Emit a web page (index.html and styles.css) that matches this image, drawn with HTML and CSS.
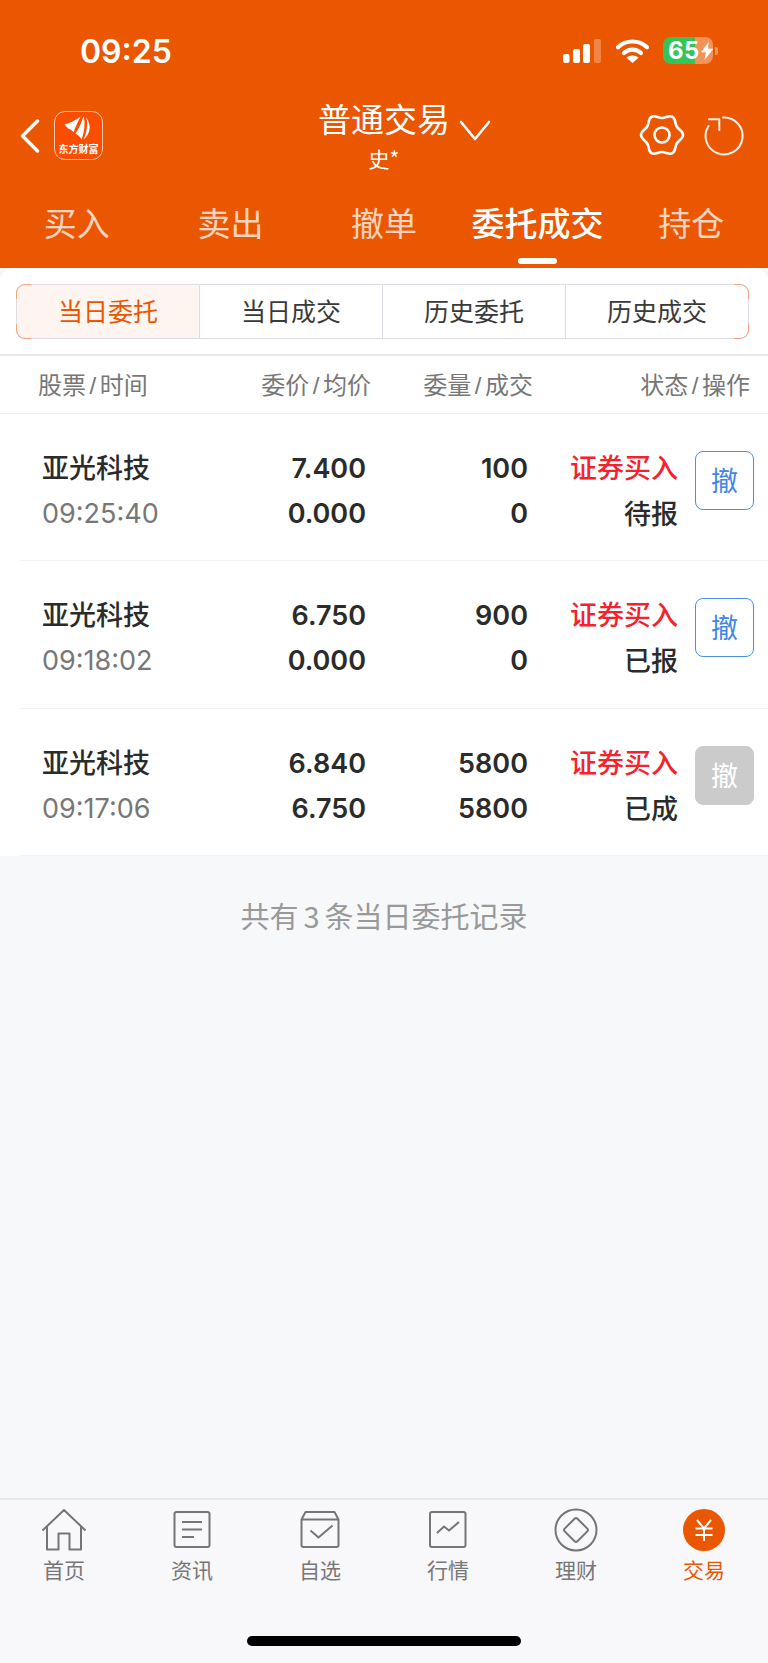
FILE: index.html
```html
<!DOCTYPE html>
<html lang="zh-CN">
<head>
<meta charset="utf-8">
<title>委托成交</title>
<link rel="stylesheet" href="styles.css">
</head>
<body>
<div class="app">
  <header class="top">
    <div class="status">
      <span class="clock">09:25</span>
      <div class="status-icons">
        <svg class="signal" width="38" height="24" viewBox="0 0 38 24">
          <rect x="0" y="15" width="6.5" height="9" rx="2" fill="#fff"/>
          <rect x="10" y="10" width="7" height="14" rx="2" fill="#fff"/>
          <rect x="20" y="5" width="7" height="19" rx="2" fill="#fff"/>
          <rect x="31" y="0" width="7" height="24" rx="2" fill="#fff" opacity=".28"/>
        </svg>
        <svg class="wifi" width="33" height="24" viewBox="0 0 33 24">
          <path d="M2 8.2C10 .6 23 .6 31 8.2" fill="none" stroke="#fff" stroke-width="4.2" stroke-linecap="round"/>
          <path d="M8 14c4.800-4.500 12.200-4.500 17 0" fill="none" stroke="#fff" stroke-width="4.200" stroke-linecap="round"/>
          <path d="M16.500 24l-6-5.300c3.500-2.800 8.500-2.800 12 0z" fill="#fff"/>
        </svg>
        <div class="battery">
          <span class="battery-num">65</span>
          <svg class="bolt" width="14" height="20" viewBox="0 0 14 20"><path d="M8.500 0L0 11.500h5.500L4 20l10-12.500H8z" fill="#fff"/></svg>
        </div>
        <span class="battery-nub"></span>
      </div>
    </div>

    <div class="bar">
      <div class="bar-left">
        <svg class="back" width="20" height="34" viewBox="0 0 20 34"><path d="M17.500 2L2.500 17l15 15" fill="none" stroke="#fff" stroke-width="3.400" stroke-linecap="round" stroke-linejoin="round"/></svg>
        <div class="logo">
          <svg class="logo-fan" width="47" height="30" viewBox="0 0 47 30">
            <path d="M25.500 4.500C20 9 14 11 9.500 12.500L13 16.500C16 17.500 17.500 18.500 18.500 20.500C20.500 14 23.500 9 25.500 4.500z" fill="#fff"/>
            <path d="M28.500 4C26.500 11 23.500 17 20.500 21.500C23 23 25.500 25 26.500 27.500C29.500 20 30.500 11 28.500 4z" fill="#fff"/>
            <path d="M31 5C33.500 12 31.500 21 28.500 27.500C34 23 38 15 31 5z" fill="#fff"/>
          </svg>
          <span class="logo-name">东方财富</span>
        </div>
      </div>
      <div class="title">
        <div class="title-main">普通交易
          <svg class="chevron" width="32" height="22" viewBox="0 0 32 22"><path d="M2 2l14 17L30 2" fill="none" stroke="#fff" stroke-width="2.600" stroke-linecap="round" stroke-linejoin="round"/></svg>
        </div>
        <div class="title-sub">史*</div>
      </div>
      <div class="bar-right">
        <svg class="gear" width="46" height="44" viewBox="0 0 46 44">
          <path d="M44 22C44 18 39.700 16.960 37.700 13.500C35.700 10.040 36.960 5.810 33.500 3.810C30.040 1.810 27 5 23 5C19 5 15.960 1.810 12.500 3.810C9.040 5.810 10.280 10.040 8.280 13.500C6.280 16.960 2 18 2 22C2 26 6.280 27.040 8.280 30.500C10.280 33.960 9.040 38.190 12.500 40.190C15.960 42.190 19 39 23 39C27 39 30.040 42.190 33.500 40.190C36.960 38.190 35.720 33.960 37.720 30.500C39.720 27.040 44 26 44 22z" fill="none" stroke="#fff" stroke-width="2.600" stroke-linejoin="round"/>
          <circle cx="23" cy="22" r="7.500" fill="none" stroke="#fff" stroke-width="2.600"/>
        </svg>
        <svg class="refresh" width="40" height="40" viewBox="0 0 40 40">
          <path d="M19 1.500A18.500 18.500 0 1 1 4.500 10M5 3.200H15.300V14" fill="none" stroke="#fff" stroke-width="2" stroke-linecap="round" stroke-linejoin="round" opacity=".92"/>
        </svg>
      </div>
    </div>

    <nav class="tabs">
      <span class="tab">买入</span>
      <span class="tab">卖出</span>
      <span class="tab">撤单</span>
      <span class="tab tab-on">委托成交</span>
      <span class="tab">持仓</span>
    </nav>
  </header>

  <main class="sheet">
    <div class="card">
      <div class="segments">
        <span class="seg seg-on">当日委托</span>
        <span class="seg">当日成交</span>
        <span class="seg">历史委托</span>
        <span class="seg">历史成交</span>
      </div>
      <div class="thead">
        <span class="th th-stock">股票<i>/</i>时间</span>
        <span class="th th-price">委价<i>/</i>均价</span>
        <span class="th th-vol">委量<i>/</i>成交</span>
        <span class="th th-state">状态<i>/</i>操作</span>
      </div>

      <div class="row">
        <div class="c-stock"><b>亚光科技</b><span class="time">09:25:40</span></div>
        <div class="c-num"><b>7.400</b><b>0.000</b></div>
        <div class="c-num c-vol"><b>100</b><b>0</b></div>
        <div class="c-state"><span class="buy">证券买入</span><b>待报</b></div>
        <span class="cancel">撤</span>
      </div>
      <div class="row">
        <div class="c-stock"><b>亚光科技</b><span class="time">09:18:02</span></div>
        <div class="c-num"><b>6.750</b><b>0.000</b></div>
        <div class="c-num c-vol"><b>900</b><b>0</b></div>
        <div class="c-state"><span class="buy">证券买入</span><b>已报</b></div>
        <span class="cancel">撤</span>
      </div>
      <div class="row">
        <div class="c-stock"><b>亚光科技</b><span class="time">09:17:06</span></div>
        <div class="c-num"><b>6.840</b><b>6.750</b></div>
        <div class="c-num c-vol"><b>5800</b><b>5800</b></div>
        <div class="c-state"><span class="buy">证券买入</span><b>已成</b></div>
        <span class="cancel cancel-off">撤</span>
      </div>
    </div>
    <p class="summary">共有 3 条当日委托记录</p>
  </main>

  <footer class="foot">
    <nav class="dock">
      <div class="dock-item">
        <svg width="46" height="44" viewBox="0 0 46 44"><path d="M1.500 22.500L23 2l21.500 20.500M6 18.500V41.500h11.500V25.500h11V41.500H40V18.500" fill="none" stroke="#757575" stroke-width="2" stroke-linejoin="round"/></svg>
        <span>首页</span>
      </div>
      <div class="dock-item">
        <svg width="46" height="44" viewBox="0 0 46 44"><rect x="5.500" y="4" width="35" height="35" rx="2" fill="none" stroke="#757575" stroke-width="2"/><path d="M13 14h20M13 21.500h20M13 29h12" fill="none" stroke="#757575" stroke-width="2"/></svg>
        <span>资讯</span>
      </div>
      <div class="dock-item">
        <svg width="46" height="44" viewBox="0 0 46 44"><path d="M4.500 11.500L8.500 4h29l4 7.500M4.500 11.500h37V37a2 2 0 0 1-2 2h-33a2 2 0 0 1-2-2z" fill="none" stroke="#757575" stroke-width="2" stroke-linejoin="round"/><path d="M13.500 22.500l8 7 14-12" fill="none" stroke="#757575" stroke-width="2"/></svg>
        <span>自选</span>
      </div>
      <div class="dock-item">
        <svg width="46" height="44" viewBox="0 0 46 44"><rect x="5" y="4" width="35.500" height="35" rx="2" fill="none" stroke="#757575" stroke-width="2"/><path d="M12 25l7-6.500 5 4L34 14" fill="none" stroke="#757575" stroke-width="2"/></svg>
        <span>行情</span>
      </div>
      <div class="dock-item">
        <svg width="46" height="44" viewBox="0 0 46 44"><circle cx="23" cy="22" r="20.500" fill="none" stroke="#757575" stroke-width="2"/><rect x="14" y="13" width="18" height="18" rx="2" transform="rotate(45 23 22)" fill="none" stroke="#757575" stroke-width="2"/></svg>
        <span>理财</span>
      </div>
      <div class="dock-item dock-on">
        <svg width="46" height="44" viewBox="0 0 46 44"><circle cx="23" cy="22" r="21" fill="#eb5600"/><path d="M16 12l7 8.500L30 12M14.500 20.500h17M14.500 27h17M23 20.500V33" fill="none" stroke="#fff" stroke-width="2"/></svg>
        <span>交易</span>
      </div>
    </nav>
    <div class="home-bar"></div>
  </footer>
</div>
</body>
</html>
```
FILE: styles.css
```css
* { box-sizing: border-box; }

html, body {
  margin: 0;
  padding: 0;
}

body {
  width: 768px;
  height: 1663px;
  overflow: hidden;
  background: #f7f8fa;
  font-family: "Noto Sans CJK SC", "Noto Sans", sans-serif;
}

.app {
  display: flex;
  flex-direction: column;
  height: 1663px;
}

/* orange header */
.top {
  height: 268px;
  flex: none;
  background: #eb5600;
  color: #fff;
}

.status {
  height: 90px;
  padding: 37px 50px 0 80px;
  display: flex;
  justify-content: space-between;
  align-items: flex-start;
}

.clock {
  font-family: Inter, "Liberation Sans", sans-serif;
  font-size: 32px;
  line-height: 30px;
  font-weight: 600;
}

.status-icons {
  display: flex;
  align-items: center;
}

.signal { margin-right: 15px; }
.wifi { margin-right: 14px; }

.battery {
  width: 50px;
  height: 27px;
  border-radius: 8px;
  background: linear-gradient(90deg, #34c45a 0 32px, #f2935c 32px 100%);
  display: flex;
  align-items: center;
  padding-left: 5px;
}

.battery-num {
  font-family: Inter, "Liberation Sans", sans-serif;
  font-size: 24px;
  line-height: 27px;
  font-weight: 700;
  letter-spacing: .3px;
}

.bolt { margin-left: 1px; }

.battery-nub {
  width: 3px;
  height: 8px;
  margin-left: 2px;
  border-radius: 0 2px 2px 0;
  background: #f2935c;
}

.bar {
  height: 109px;
  padding: 0 24px 0 20px;
  display: flex;
  justify-content: space-between;
  position: relative;
}

.bar-left {
  display: flex;
  align-items: flex-start;
}

.back { margin-top: 29px; }

.logo {
  width: 49px;
  height: 49px;
  margin: 21px 0 0 14px;
  border-radius: 11px;
  border: 1px solid #f7c6ac;
  background: #fb4d00;
  display: flex;
  flex-direction: column;
  align-items: center;
  overflow: hidden;
}

.logo-fan { flex: none; }

.logo-name {
  font-size: 10px;
  line-height: 11px;
  font-weight: 700;
  white-space: nowrap;
  margin-top: 1px;
}

.title {
  position: absolute;
  left: 0;
  right: 0;
  top: 0;
  text-align: center;
}

.title-main {
  position: relative;
  display: inline-block;
  font-size: 33px;
  line-height: 48px;
  margin-top: 4px;
}

.chevron {
  position: absolute;
  left: 141px;
  top: 26px;
}

.title-sub {
  font-size: 21px;
  line-height: 30px;
  margin-top: 1px;
}

.bar-right {
  display: flex;
  align-items: flex-start;
  gap: 19px;
}

.gear { margin-top: 23px; }
.refresh { margin-top: 26px; }

.tabs {
  display: flex;
  height: 69px;
}

.tab {
  flex: 1;
  text-align: center;
  font-size: 33px;
  line-height: 46px;
  opacity: .75;
  position: relative;
}

.tab-on {
  opacity: 1;
  font-weight: 500;
  white-space: nowrap;
}

.tab-on::after {
  content: "";
  position: absolute;
  left: 50%;
  top: 59px;
  width: 39px;
  height: 6px;
  margin-left: -20px;
  border-radius: 3px;
  background: #fff;
}

/* white list card on the grey page */
.sheet {
  flex: 1;
  background: #f7f8fa;
}

.card {
  background: #fff;
  border-radius: 14px 14px 0 0;
}

.segments {
  display: flex;
  padding: 16px 19px 16px 16px;
  height: 88px;
  border-bottom: 2px solid #e8e9ed;
}

.seg {
  flex: 1;
  height: 55px;
  line-height: 51px;
  text-align: center;
  font-size: 25px;
  color: #3a3a3a;
  background: #fff;
  border: 1px solid #dddee5;
  border-left-width: 0;
  position: relative;
}

.seg:first-child {
  border-left-width: 1px;
  border-radius: 9px 0 0 9px;
}

.seg:last-child { border-radius: 0 9px 9px 0; }

.seg-on {
  color: #eb5600;
  background: #fef5f1;
}

/* the outer corners of the control pick up the accent colour */
.seg:first-child::before,
.seg:first-child::after,
.seg:last-child::before,
.seg:last-child::after {
  content: "";
  position: absolute;
  width: 14px;
  height: 14px;
  border: 0 solid #f2a680;
}

.seg:first-child::before {
  left: -1px; top: -1px;
  border-width: 1px 0 0 1px;
  border-top-left-radius: 9px;
}

.seg:first-child::after {
  left: -1px; bottom: -1px;
  border-width: 0 0 1px 1px;
  border-bottom-left-radius: 9px;
}

.seg:last-child::before {
  right: -1px; top: -1px;
  border-width: 1px 1px 0 0;
  border-top-right-radius: 9px;
}

.seg:last-child::after {
  right: -1px; bottom: -1px;
  border-width: 0 1px 1px 0;
  border-bottom-right-radius: 9px;
}

.thead {
  height: 58px;
  display: flex;
  align-items: center;
  border-bottom: 1px solid #eeeff1;
  font-size: 24px;
  line-height: 34px;
  color: #777;
  white-space: nowrap;
}

.th i {
  font-style: normal;
  margin: 0 3.500px;
  font-family: "Liberation Sans", sans-serif;
}

.th-stock { width: 261px; padding-left: 38px; }
.th-price { width: 110px; text-align: right; }
.th-vol { width: 162px; text-align: right; }
.th-state { width: 217px; text-align: right; }

.row {
  height: 147.300px;
  margin-left: 20px;
  padding: 32px 14px 0 22px;
  display: flex;
  align-items: flex-start;
  border-bottom: 1px solid #f2f3f5;
  font-size: 27px;
  line-height: 45px;
  color: #2b2b2b;
  white-space: nowrap;
}

.row b { font-weight: 500; display: block; }

.c-stock {
  width: 174px;
  display: flex;
  flex-direction: column;
}

.c-stock b { margin: -2px 0 2px; }

.time {
  font-family: Inter, "Liberation Sans", sans-serif;
  font-size: 27px;
  color: #777;
}

.c-num {
  width: 150px;
  text-align: right;
  font-family: Inter, "Liberation Sans", sans-serif;
  font-size: 27px;
}

.c-num b { font-weight: 600; }
.c-vol { width: 162px; }

.c-state {
  width: 150px;
  text-align: right;
  font-size: 27px;
}

.buy {
  color: #f5222d;
  display: block;
  font-weight: 500;
  margin: -2px 0 1px;
}

.cancel {
  width: 59px;
  height: 59px;
  margin: 5px 0 0 17px;
  flex: none;
  border: 1px solid #4a90e8;
  border-radius: 8px;
  color: #3f86e6;
  font-size: 27px;
  line-height: 55px;
  text-align: center;
}

.cancel-off {
  background: #cbcbcb;
  border-color: #cbcbcb;
  color: #fff;
}

.summary {
  margin: 36px 0 0;
  text-align: center;
  font-size: 29px;
  line-height: 46px;
  word-spacing: -1.500px;
  color: #999;
}

/* bottom dock */
.foot {
  height: 165px;
  flex: none;
  border-top: 2px solid #e6e7ea;
  background: #f8f8fb;
  position: relative;
}

.dock { display: flex; }

.dock-item {
  flex: 1;
  padding-top: 8px;
  display: flex;
  flex-direction: column;
  align-items: center;
  font-size: 21px;
  line-height: 30px;
  color: #777;
}

.dock-item span { margin-top: 2px; }
.dock-on { color: #eb5600; }

.home-bar {
  position: absolute;
  left: 247px;
  top: 136px;
  width: 274px;
  height: 10px;
  border-radius: 5px;
  background: #000;
}
```
